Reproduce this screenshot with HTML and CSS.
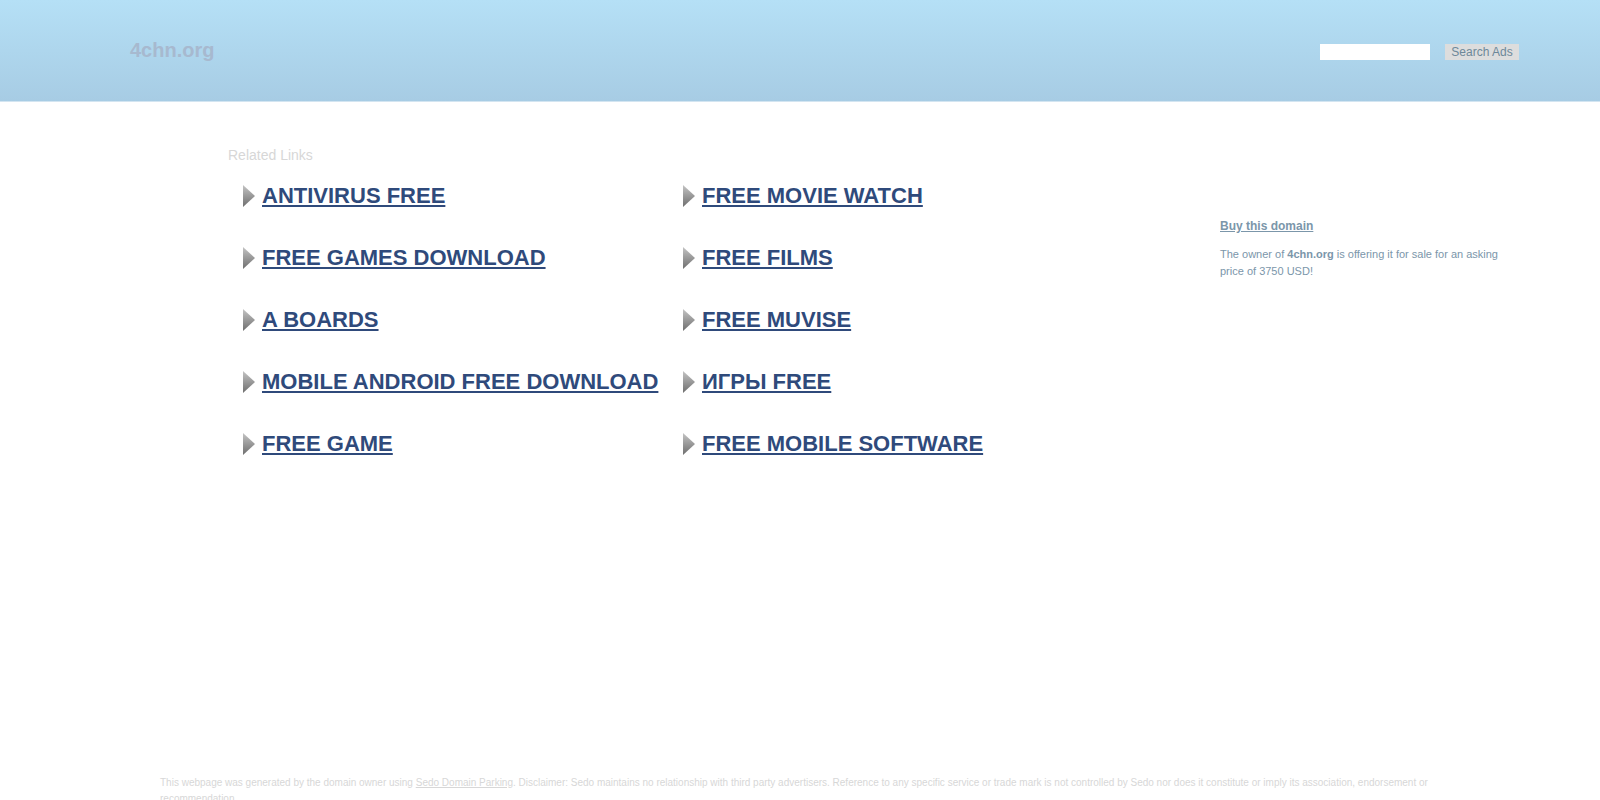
FILE: index.html
```html
<!DOCTYPE html>
<html lang="en">
<head>
<meta charset="utf-8">
<title>4chn.org</title>
<link rel="stylesheet" href="styles.css">
</head>
<body>
<svg class="defs" width="0" height="0" aria-hidden="true">
  <defs>
    <linearGradient id="shade" x1="0" y1="0" x2="0" y2="1">
      <stop offset="0" stop-color="#c4c4c4"/>
      <stop offset="1" stop-color="#6e6e6e"/>
    </linearGradient>
    <symbol id="arrow" viewBox="0 0 12 22"><path d="M0 0L12 11L0 22Z" fill="url(#shade)"/></symbol>
  </defs>
</svg>
<header class="header">
  <h1 class="logo">4chn.org</h1>
  <form class="search">
    <input class="search-box" type="text" name="q" aria-label="Search">
    <button class="search-button" type="submit">Search Ads</button>
  </form>
</header>
<main class="main">
  <section class="related">
    <h2 class="related-title">Related Links</h2>
    <ul class="links">
      <li class="item"><svg class="arrow"><use href="#arrow"/></svg><a class="link" href="#">ANTIVIRUS FREE</a></li>
      <li class="item"><svg class="arrow"><use href="#arrow"/></svg><a class="link" href="#">FREE MOVIE WATCH</a></li>
      <li class="item"><svg class="arrow"><use href="#arrow"/></svg><a class="link" href="#">FREE GAMES DOWNLOAD</a></li>
      <li class="item"><svg class="arrow"><use href="#arrow"/></svg><a class="link" href="#">FREE FILMS</a></li>
      <li class="item"><svg class="arrow"><use href="#arrow"/></svg><a class="link" href="#">A BOARDS</a></li>
      <li class="item"><svg class="arrow"><use href="#arrow"/></svg><a class="link" href="#">FREE MUVISE</a></li>
      <li class="item"><svg class="arrow"><use href="#arrow"/></svg><a class="link" href="#">MOBILE ANDROID FREE DOWNLOAD</a></li>
      <li class="item"><svg class="arrow"><use href="#arrow"/></svg><a class="link" href="#">ИГРЫ FREE</a></li>
      <li class="item"><svg class="arrow"><use href="#arrow"/></svg><a class="link" href="#">FREE GAME</a></li>
      <li class="item"><svg class="arrow"><use href="#arrow"/></svg><a class="link" href="#">FREE MOBILE SOFTWARE</a></li>
    </ul>
  </section>
  <aside class="sale">
    <a class="sale-link" href="#">Buy this domain</a>
    <p class="sale-text">The owner of <b>4chn.org</b> is offering it for sale for an asking price of 3750 USD!</p>
  </aside>
</main>
<footer class="footer">This webpage was generated by the domain owner using <a class="footer-link" href="#">Sedo Domain Parking</a>. Disclaimer: Sedo maintains no relationship with third party advertisers. Reference to any specific service or trade mark is not controlled by Sedo nor does it constitute or imply its association, endorsement or recommendation.</footer>
</body>
</html>
```
FILE: styles.css
```css
* {
  box-sizing: border-box;
}

body {
  margin: 0;
  background: #fff;
  font-family: "Liberation Sans", Arial, sans-serif;
}

.defs {
  display: block;
}

.header {
  display: flex;
  align-items: center;
  justify-content: space-between;
  padding: 38px 81px 39px 130px;
  background: linear-gradient(#b5e0f6, #a7cce4);
  border-bottom: 1px solid #d3e5f1;
}

.logo {
  margin: 0;
  font-size: 20px;
  line-height: 24px;
  color: #a7b9cf;
}

.search {
  display: flex;
  gap: 15px;
  padding-top: 4px;
}

.search-box {
  width: 110px;
  height: 16px;
  padding: 0 2px;
  border: 0;
  background: #fff;
  font-size: 12px;
}

.search-button {
  width: 74px;
  height: 16px;
  padding: 0;
  border: 0;
  background: #ddd;
  color: #6d8899;
  font-family: inherit;
  font-size: 12px;
  line-height: 16px;
}

.main {
  display: flex;
  justify-content: space-between;
  min-height: 673px;
  padding: 45px 80px 0 228px;
}

.related-title {
  margin: 0;
  font-size: 14px;
  font-weight: 400;
  line-height: 16px;
  color: #d7d7d7;
}

.links {
  display: grid;
  grid-template-columns: 440px 440px;
  row-gap: 36px;
  margin: 0;
  padding: 20px 0 0 15px;
  list-style: none;
}

.item {
  display: flex;
  align-items: center;
  gap: 7px;
}

.arrow {
  flex: none;
  width: 12px;
  height: 22px;
}

.link {
  font-size: 22px;
  font-weight: 700;
  line-height: 26px;
  color: #2f4a7b;
  white-space: nowrap;
  text-rendering: optimizeSpeed;
}

.sale {
  width: 300px;
  padding-top: 71px;
  color: #7b96aa;
}

.sale-link {
  display: block;
  font-size: 12px;
  font-weight: 700;
  line-height: 16px;
  color: inherit;
}

.sale-text {
  margin: 12px 0 0;
  font-size: 11px;
  line-height: 17px;
}

.footer {
  padding: 0 10%;
  font-size: 10px;
  line-height: 16px;
  color: #d7d7d7;
}

.footer-link {
  color: inherit;
}
```
